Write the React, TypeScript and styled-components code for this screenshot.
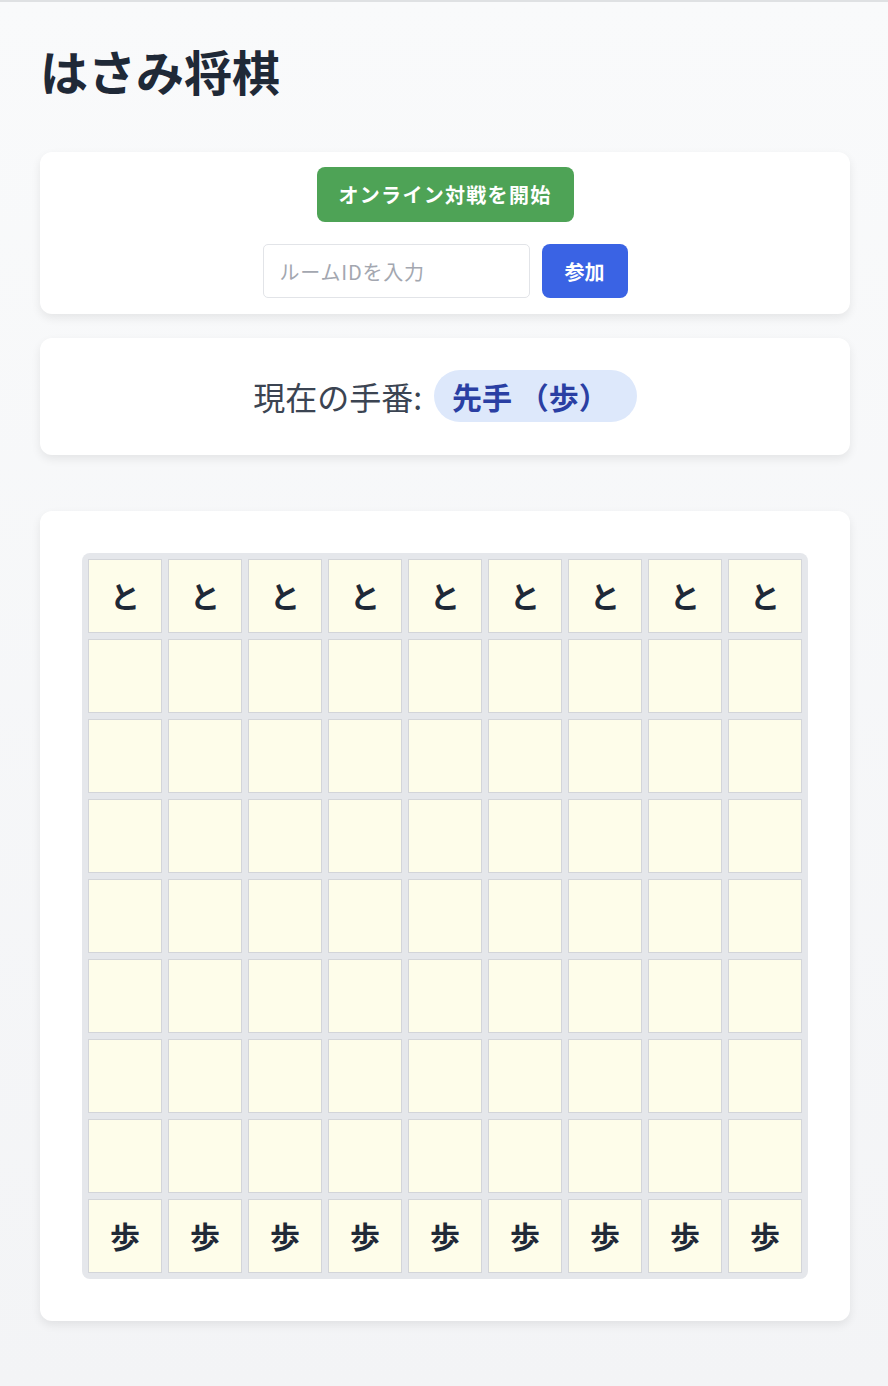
import styled, { createGlobalStyle } from 'styled-components';

const GlobalStyle = createGlobalStyle`
  html, body {
    margin: 0;
    padding: 0;
  }

  body {
    font-family: "Noto Sans CJK JP", "Noto Sans", sans-serif;
    background: linear-gradient(180deg, #f9fafb 0%, #f3f4f6 100%);
    min-height: 1386px;
    border-top: 2px solid #dfe1e3;
    box-sizing: border-box;
  }
`;

const Page = styled.main`
  padding: 0 38px 64px 40px;
`;

const Title = styled.h1`
  margin: 0;
  padding: 39px 0 53px;
  font-size: 48px;
  line-height: 58px;
  font-weight: 700;
  color: #1f2937;
`;

const Card = styled.section<{ $pad: string; $mt?: number }>`
  background: #ffffff;
  border-radius: 12px;
  padding: ${(p) => p.$pad};
  margin-top: ${(p) => p.$mt ?? 0}px;
  box-shadow: 0 4px 10px rgba(0, 0, 0, 0.08);
`;

const Controls = styled.div`
  display: flex;
  flex-direction: column;
  align-items: center;
  gap: 22px;
`;

const StartButton = styled.button`
  height: 55px;
  padding: 0 22px;
  border: none;
  border-radius: 8px;
  background-color: #4ea356;
  color: #ffffff;
  font-family: inherit;
  font-size: 20px;
  font-weight: 700;
  letter-spacing: 1.3px;
  cursor: pointer;
`;

const JoinRow = styled.div`
  display: flex;
  align-items: center;
  gap: 12px;
`;

const RoomInput = styled.input`
  width: 267px;
  height: 54px;
  box-sizing: border-box;
  padding: 0 16px;
  border: 1px solid #e2e4e8;
  border-radius: 5px;
  font-family: inherit;
  font-size: 20px;
  letter-spacing: 0.8px;
  color: #1f2937;

  &::placeholder {
    color: #a3a7b0;
  }
`;

const JoinButton = styled.button`
  width: 86px;
  height: 54px;
  border: none;
  border-radius: 8px;
  background-color: #3a63e4;
  color: #ffffff;
  font-family: inherit;
  font-size: 20px;
  font-weight: 700;
  cursor: pointer;
`;

const TurnRow = styled.div`
  display: flex;
  justify-content: center;
  align-items: center;
  gap: 12px;
  height: 52px;
`;

const TurnLabel = styled.span`
  font-size: 32px;
  color: #3b4452;
`;

const TurnBadge = styled.span`
  display: inline-flex;
  align-items: center;
  height: 52px;
  padding: 0 28px 0 18px;
  border-radius: 26px;
  background-color: #dde8fb;
  color: #2a3fa3;
  font-size: 30px;
  font-weight: 700;
`;

const Board = styled.div`
  display: grid;
  grid-template-columns: repeat(9, 74px);
  grid-auto-rows: 74px;
  gap: 6px;
  padding: 6px;
  margin: 0 auto;
  width: max-content;
  background-color: #e5e7eb;
  border-radius: 8px;
`;

const Cell = styled.div`
  display: flex;
  justify-content: center;
  align-items: center;
  box-sizing: border-box;
  border: 1px solid #d3d5d9;
  background-color: #fefdea;
  font-size: 30px;
  font-weight: 700;
  color: #1f2937;
  padding-bottom: 3px;
`;

const pieceAt = (row: number) => {
  if (row === 0) return 'と';
  if (row === 8) return '歩';
  return '';
};

const App = () => {
  const rows = Array.from({ length: 9 }, (_, r) => r);

  return (
    <>
      <GlobalStyle />
      <Page>
        <Title>はさみ将棋</Title>
        <Card $pad="15px 16px 16px">
          <Controls>
            <StartButton>オンライン対戦を開始</StartButton>
            <JoinRow>
              <RoomInput placeholder="ルームIDを入力" />
              <JoinButton>参加</JoinButton>
            </JoinRow>
          </Controls>
        </Card>
        <Card $pad="32px 32px 33px" $mt={24}>
          <TurnRow>
            <TurnLabel>現在の手番:</TurnLabel>
            <TurnBadge>先手 （歩）</TurnBadge>
          </TurnRow>
        </Card>
        <Card $pad="42px" $mt={56}>
          <Board>
            {rows.map((r) =>
              rows.map((c) => <Cell key={`${r}-${c}`}>{pieceAt(r)}</Cell>)
            )}
          </Board>
        </Card>
      </Page>
    </>
  );
};

export default App;
